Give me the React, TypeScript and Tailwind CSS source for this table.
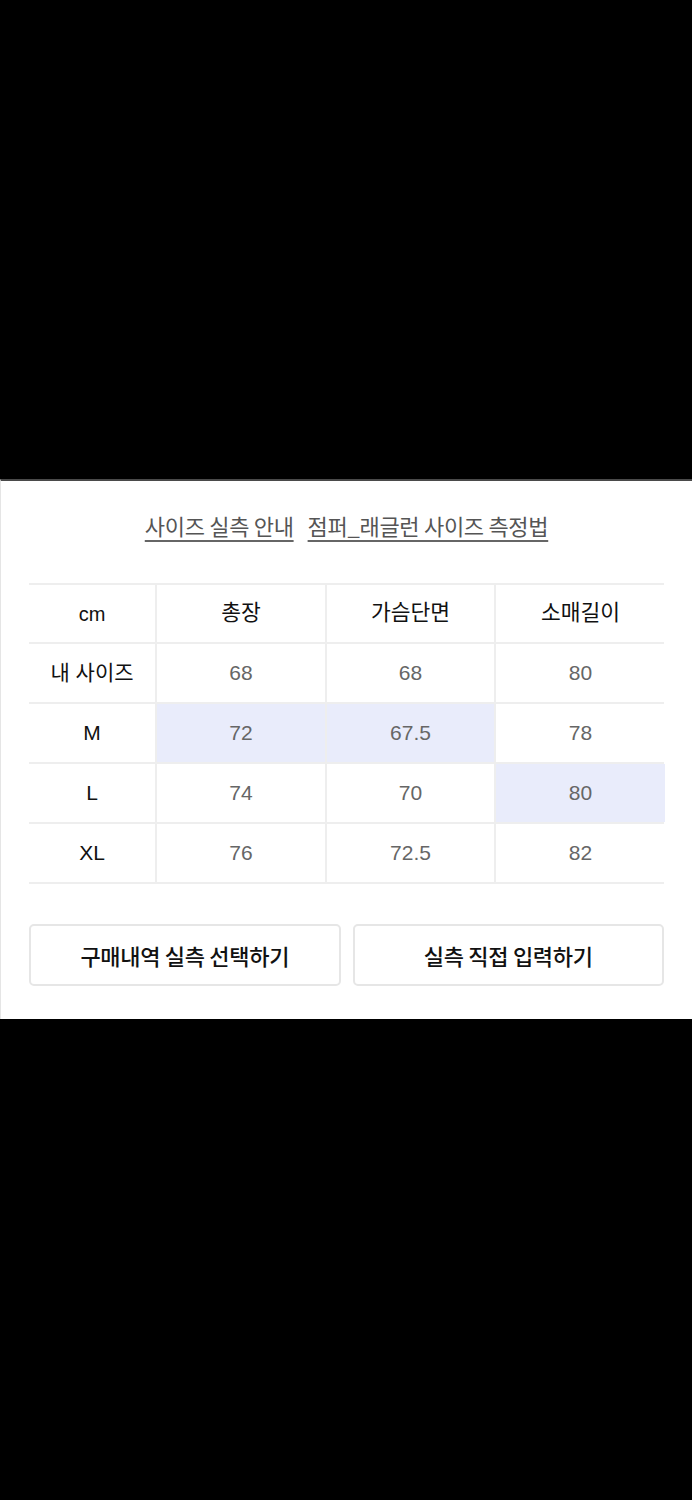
import React from "react";

const rows = [
  { label: "내 사이즈", vals: ["68", "68", "80"], hl: [false, false, false] },
  { label: "M", vals: ["72", "67.5", "78"], hl: [true, true, false] },
  { label: "L", vals: ["74", "70", "80"], hl: [false, false, true] },
  { label: "XL", vals: ["76", "72.5", "82"], hl: [false, false, false] },
];

export default function App() {
  return (
    <div
      className="w-[692px] h-[1500px] bg-black flex flex-col"
      style={{ fontFamily: '"Noto Sans CJK KR", "Noto Sans", sans-serif' }}
    >
      <div className="h-[479px] shrink-0" />
      <div className="border-t-2 border-[#4a4a4a] bg-white h-[540px] shrink-0 pt-[24px] px-[28px] border-l border-l-[#e5e5e5]">
        <div className="flex justify-center gap-[14px] text-[22px] text-[#555] leading-[40px] tracking-[-0.3px]">
          <span className="underline underline-offset-[5px] decoration-[#666]">사이즈 실측 안내</span>
          <span className="underline underline-offset-[5px] decoration-[#666]">점퍼_래글런 사이즈 측정법</span>
        </div>
        <div className="mt-[38px] border-t-2 border-[#eeeeee]">
          <div className="grid grid-cols-[128px_170px_169px_169px] h-[59px] border-b-2 border-[#eeeeee]">
            <div className="flex items-center justify-center text-[20px] text-[#111] border-r-2 border-[#eeeeee]" style={{ fontFamily: '"Liberation Sans", Arial, sans-serif' }}>cm</div>
            <div className="flex items-center justify-center text-[21.5px] text-[#111] border-r-2 border-[#eeeeee] pb-[4px]">총장</div>
            <div className="flex items-center justify-center text-[21.5px] text-[#111] border-r-2 border-[#eeeeee] pb-[4px]">가슴단면</div>
            <div className="flex items-center justify-center text-[21.5px] text-[#111] pb-[4px]">소매길이</div>
          </div>
          {rows.map((r) => (
            <div key={r.label} className="grid grid-cols-[128px_170px_169px_169px] h-[60px] border-b-2 border-[#eeeeee]">
              <div
                className="flex items-center justify-center text-[21px] text-[#111] border-r-2 border-[#eeeeee]"
                style={{ fontFamily: '"Liberation Sans", "Noto Sans CJK KR", sans-serif' }}
              >
                {r.label}
              </div>
              {r.vals.map((v, i) => (
                <div
                  key={i}
                  className={
                    "flex items-center justify-center text-[21px] text-[#666] " +
                    (i < 2 ? "border-r-2 border-[#eeeeee] " : "") +
                    (r.hl[i] ? "bg-[#e9ecfb]" : "bg-white")
                  }
                  style={{ fontFamily: '"Liberation Sans", Arial, sans-serif' }}
                >
                  {v}
                </div>
              ))}
            </div>
          ))}
        </div>
        <div className="mt-[40px] grid grid-cols-2 gap-[12px]">
          <button className="h-[62px] border-2 border-[#e6e6e6] rounded-[5px] bg-white text-[22px] text-[#111] font-medium tracking-[-0.3px]">
            구매내역 실측 선택하기
          </button>
          <button className="h-[62px] border-2 border-[#e6e6e6] rounded-[5px] bg-white text-[22px] text-[#111] font-medium tracking-[-0.3px]">
            실측 직접 입력하기
          </button>
        </div>
      </div>
      <div className="flex-1" />
    </div>
  );
}
